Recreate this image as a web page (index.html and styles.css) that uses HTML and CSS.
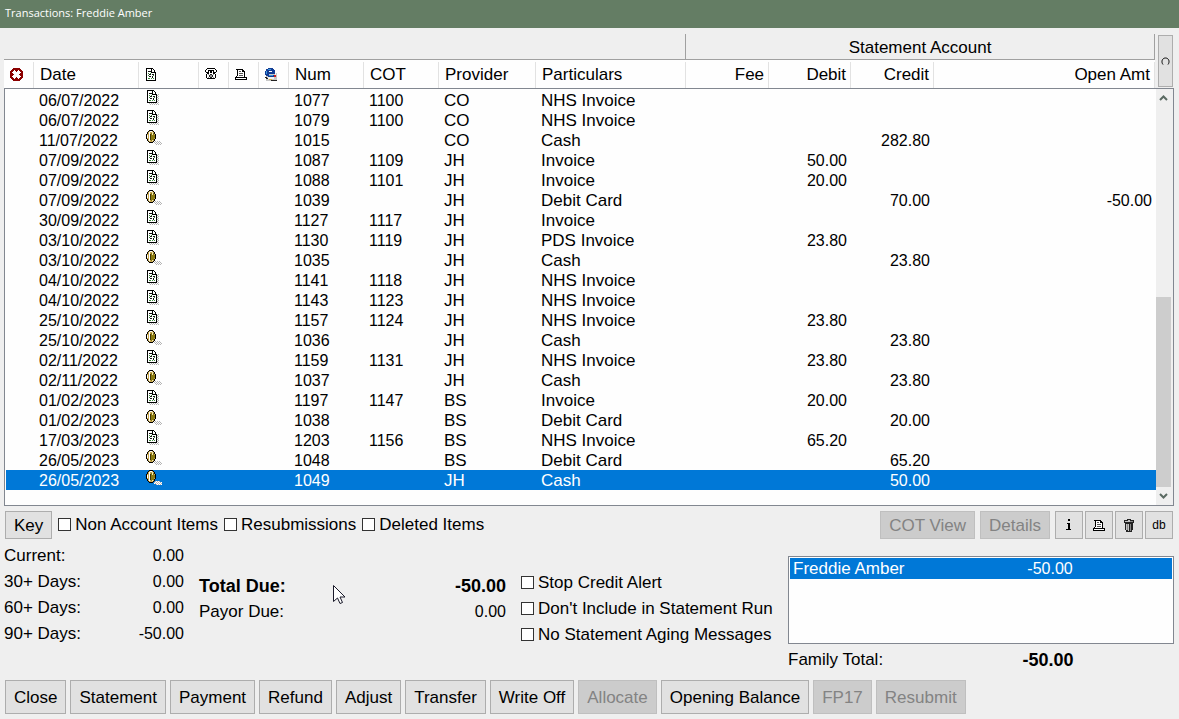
FILE: index.html
```html
<!DOCTYPE html>
<html lang="en-GB">

<head>
    <meta charset="UTF-8">
    <meta name="viewport" content="width=device-width, initial-scale=1.0">
    <title>Transactions: Freddie Amber</title>
    <link rel="stylesheet" href="styles.css">
</head>

<body>
    <!-- Shared icons -->
    <svg class="sprite" aria-hidden="true">
        <defs>
            <pattern id="dither" width="2" height="2" patternUnits="userSpaceOnUse">
                <path fill="#b4b4b4" d="M0 0h1v1h-1zM1 1h1v1h-1z" />
            </pattern>
            <g id="page">
                <path fill="#fff" d="M1 1h6v1h1v1h1v1h1v8h-9z" />
                <path fill="#000" d="M0 0h7v1h-7zM0 1h1v12h-1zM1 12h9v1h-9zM9 4h1v9h-1zM5 1h1v4h-1zM7 1h1v1h-1zM8 2h1v2h-1zM6 4h3v1h-3z" />
                <path fill="#111" d="M2 3h3v1h-3zM3 6h2v1h-2zM6 6h2v1h-2zM3 8h2v1h-2zM6 8h1v2h-1z" />
                <path fill="#3c8c3c" d="M2 5h1v1h-1zM4 5h1v1h-1zM2 7h1v1h-1zM7 7h1v1h-1zM2 10h2v1h-2zM5 10h1v1h-1zM7 10h1v1h-1z" />
            </g>
            <symbol id="invoice" viewBox="0 0 16 16">
                <path fill="url(#dither)" d="M10 4h3v11h-10v-2h7z" />
                <use href="#page" x="1" />
            </symbol>
            <symbol id="coin" viewBox="0 0 16 16">
                <path class="coin-shadow" d="M9 11h5v1h2v3h-6v-1h-2v-2h1z" />
                <path fill="url(#dither)" d="M9 11h5v1h2v3h-6v-1h-2z" />
                <path fill="#000" d="M3 0h4v1h1v1h1v2h1v5h-1v2h-1v1h-1v1h-4v-1h-1v-1h-1v-2h-1v-5h1v-2h1v-1h1z" />
                <path fill="#c8a850" d="M3 1h4v1h1v2h1v5h-1v2h-1v1h-4v-1h-1v-2h-1v-5h1v-2h1z" />
                <path fill="#fff" d="M3 2h1v9h-1zM1 5h1v3h-1zM4 1h2v1h-2z" />
                <path fill="#8a7a10" d="M5 3h3v2h1v3h-1v2h-1v1h-2z" />
                <path fill="#3c3408" d="M4 4h1v6h-1z" />
                <path fill="#f0e4b4" d="M6 2h1v3h-1zM6 10h1v1h-1z" />
            </symbol>
            <symbol id="printer" viewBox="0 0 12 11">
                <path fill="#fff" d="M3 1h5v1h1v6h-7v-1h1zM1 9h10v1h-10z" />
                <path fill="#000" d="M1 0h7v1h-7zM2 1h1v6h-1zM7 1h1v2h-1zM8 1h1v1h-1zM8 2h2v1h-2zM9 3h1v5h-1zM1 7h1v1h-1zM0 8h12v1h-12zM0 9h1v1h-1zM11 9h1v1h-1zM0 10h12v1h-12z" />
                <path fill="#555" d="M4 2h2v1h-2zM4 4h4v1h-4zM4 6h4v1h-4z" />
            </symbol>
        </defs>
    </svg>

    <header class="titlebar">
        <h1>Transactions: Freddie Amber</h1>
    </header>

    <main>
        <section class="grid-head">
            <table class="head-table">
                <colgroup>
                    <col class="c-void-head"><col class="c-date"><col class="c-type"><col class="c-flag"><col class="c-flag"><col class="c-flag"><col class="c-num"><col class="c-num"><col class="c-provider"><col class="c-particulars"><col class="c-fee"><col class="c-debit"><col class="c-fee"><col>
                </colgroup>
                <thead>
                    <tr class="band">
                        <td colspan="10"></td>
                        <th colspan="4" scope="colgroup">Statement Account</th>
                    </tr>
                    <tr class="columns">
                        <th scope="col" aria-label="Deleted">
                            <svg width="13" height="16" viewBox="0 0 13 16">
                                <path fill="#8b0000" d="M3 1h7v1h1v1h1v1h1v7h-1v1h-1v1h-1v1h-7v-1h-1v-1h-1v-1h-1v-7h1v-1h1v-1h1z" />
                                <path fill="#fff" d="M4 3h1v1h1v1h1v-1h1v-1h1v1h1v1h1v1h-1v1h-1v1h1v1h1v1h-1v1h-1v1h-1v-1h-1v-1h-1v1h-1v1h-1v-1h-1v-1h-1v-1h1v-1h1v-1h-1v-1h-1v-1h1v-1h1z" />
                            </svg>
                        </th>
                        <th scope="col">Date</th>
                        <th scope="col" aria-label="Type">
                            <svg width="12" height="16" viewBox="0 0 12 16"><use href="#page" x="1" y="1" /></svg>
                        </th>
                        <th scope="col" aria-label="Phone">
                            <svg width="12" height="16" viewBox="0 0 12 16">
                                <path fill="#fff" d="M1 2h10v3h-1v6h-8v-6h-1z" />
                                <path fill="#000" d="M2 1h8v1h-8zM1 2h1v1h-1zM10 2h1v1h-1zM0 3h1v2h-1zM11 3h1v2h-1zM1 5h3v1h-3zM8 5h3v1h-3zM3 3h6v1h-6zM3 4h1v1h-1zM8 4h1v1h-1zM5 4h2v2h-2zM2 6h2v1h-2zM8 6h2v1h-2zM1 7h1v4h-1zM10 7h1v4h-1zM2 11h8v1h-8z" />
                                <path fill="#222" d="M5 7h2v1h-2zM4 8h1v2h-1zM7 8h1v2h-1zM5 10h2v1h-2z" />
                                <path fill="#999" d="M5 8h2v2h-2zM3 7h1v1h-1zM8 7h1v1h-1zM3 10h1v1h-1zM8 10h1v1h-1z" />
                            </svg>
                        </th>
                        <th scope="col" aria-label="Printed">
                            <svg width="12" height="13" viewBox="0 0 12 13"><use href="#printer" width="12" height="11" /></svg>
                        </th>
                        <th scope="col" aria-label="Sent">
                            <svg width="13" height="16" viewBox="0 0 13 16">
                                <path fill="#c8c8c8" d="M1 6h11v8h-11z" />
                                <path fill="#f4f4f4" d="M3 10h6v2h-6zM10 6h1v2h-1z" />
                                <path fill="#123c94" d="M3 1h5v1h1v1h1v4h-6v1h6v1h-1v1h-6v-1h-2v-1h-1v-4h1v-2h2z" />
                                <path fill="#3c96dc" d="M3 2h3v1h-3zM1 4h1v3h-1zM4 8h4v1h-4z" />
                                <path fill="#fff" d="M4 4h3v1h-3z" />
                                <path fill="#c82020" d="M9 8h2v2h-2z" />
                                <path fill="#222" d="M0 10h2v1h-2zM1 11h2v1h-2zM6 13h6v1h-6z" />
                                <path fill="#dcb43c" d="M4 12h3v1h-3z" />
                            </svg>
                        </th>
                        <th scope="col">Num</th>
                        <th scope="col">COT</th>
                        <th scope="col">Provider</th>
                        <th scope="col">Particulars</th>
                        <th scope="col" class="right">Fee</th>
                        <th scope="col" class="right">Debit</th>
                        <th scope="col" class="right">Credit</th>
                        <th scope="col" class="right">Open Amt</th>
                    </tr>
                </thead>
            </table>
            <button class="refresh" aria-label="Refresh">
                <svg width="9" height="9" viewBox="0 0 9 9"><path fill="none" stroke="#000" d="M2 7.500C0 5 1 1 4.500 1S9 5 7 7.500" /></svg>
            </button>
        </section>

        <section class="grid-body">
            <table class="body-table" aria-label="Transactions">
                <colgroup>
                    <col class="c-void"><col class="c-date"><col class="c-type"><col class="c-flag"><col class="c-flag"><col class="c-flag"><col class="c-num"><col class="c-num"><col class="c-provider"><col class="c-particulars"><col class="c-fee"><col class="c-debit"><col class="c-fee"><col>
                </colgroup>
                <tbody id="rows"></tbody>
            </table>
            <div class="scrollbar">
                <button aria-label="Scroll up">
                    <svg width="9" height="6" viewBox="0 0 9 6"><path fill="none" stroke="#5a6a62" stroke-width="2" d="M1 5L4.500 1.500L8 5" /></svg>
                </button>
                <div class="track"><div class="thumb"></div></div>
                <button aria-label="Scroll down">
                    <svg width="9" height="6" viewBox="0 0 9 6"><path fill="none" stroke="#5a6a62" stroke-width="2" d="M1 1L4.500 4.500L8 1" /></svg>
                </button>
            </div>
        </section>

        <section class="toolbar">
            <button>Key</button>
            <label><input type="checkbox">Non Account Items</label>
            <label><input type="checkbox">Resubmissions</label>
            <label><input type="checkbox">Deleted Items</label>
            <div class="toolbar-right">
                <button disabled>COT View</button>
                <button disabled>Details</button>
                <div class="icon-buttons">
                    <button aria-label="Information">
                        <svg width="6" height="12" viewBox="0 0 6 12"><path fill="#000" d="M2 0h2v2h-2zM1 4h3v6h1v1h-5v-1h2v-5h-1z" /></svg>
                    </button>
                    <button aria-label="Print">
                        <svg width="12" height="11"><use href="#printer" /></svg>
                    </button>
                    <button aria-label="Delete">
                        <svg width="12" height="13" viewBox="0 0 12 13">
                            <path fill="#222" d="M4 0h4v1h3v3h-1v7h-1v2h-6v-2h-1v-7h-1v-3h3z" />
                            <path fill="#c4c4c4" d="M5 1h2v1h-2zM2 2h5v1h-5zM3 5h1v6h-1zM5 5h1v7h-1z" />
                            <path fill="#888" d="M7 5h1v7h-1zM4 5h1v6h-1zM7 2h3v1h-3z" />
                        </svg>
                    </button>
                    <button class="small">db</button>
                </div>
            </div>
        </section>

        <section class="summary">
            <dl class="amounts">
                <dt>Current:</dt><dd>0.00</dd>
                <dt>30+ Days:</dt><dd>0.00</dd>
                <dt>60+ Days:</dt><dd>0.00</dd>
                <dt>90+ Days:</dt><dd>-50.00</dd>
            </dl>
            <dl class="amounts due">
                <dt class="bold">Total Due:</dt><dd class="bold">-50.00</dd>
                <dt>Payor Due:</dt><dd>0.00</dd>
            </dl>
            <div class="options">
                <label><input type="checkbox">Stop Credit Alert</label>
                <label><input type="checkbox">Don't Include in Statement Run</label>
                <label><input type="checkbox">No Statement Aging Messages</label>
            </div>
            <div class="family">
                <div class="family-list" role="listbox" aria-label="Family members">
                    <div class="family-row selected" role="option" aria-selected="true"><span>Freddie Amber</span><span class="amount">-50.00</span></div>
                </div>
                <div class="family-row"><span>Family Total:</span><strong class="bold">-50.00</strong></div>
            </div>
        </section>

        <footer class="actions">
            <button>Close</button>
            <button>Statement</button>
            <button>Payment</button>
            <button>Refund</button>
            <button>Adjust</button>
            <button>Transfer</button>
            <button>Write Off</button>
            <button disabled>Allocate</button>
            <button>Opening Balance</button>
            <button disabled>FP17</button>
            <button disabled>Resubmit</button>
        </footer>
    </main>

    <svg class="pointer" width="13" height="20" viewBox="0 0 13 20" aria-hidden="true">
        <path fill="#fff" stroke="#1a1a2a" d="M0.500 0.500V16.500L4.500 13L7 18.500L9.500 17.500L7 12H12Z" />
    </svg>

    <script>
        // date, icon, num, cot, provider, particulars, debit, credit, open amount
        const transactions = [
            ["06/07/2022", "invoice", "1077", "1100", "CO", "NHS Invoice", "", "", ""],
            ["06/07/2022", "invoice", "1079", "1100", "CO", "NHS Invoice", "", "", ""],
            ["11/07/2022", "coin", "1015", "", "CO", "Cash", "", "282.80", ""],
            ["07/09/2022", "invoice", "1087", "1109", "JH", "Invoice", "50.00", "", ""],
            ["07/09/2022", "invoice", "1088", "1101", "JH", "Invoice", "20.00", "", ""],
            ["07/09/2022", "coin", "1039", "", "JH", "Debit Card", "", "70.00", "-50.00"],
            ["30/09/2022", "invoice", "1127", "1117", "JH", "Invoice", "", "", ""],
            ["03/10/2022", "invoice", "1130", "1119", "JH", "PDS Invoice", "23.80", "", ""],
            ["03/10/2022", "coin", "1035", "", "JH", "Cash", "", "23.80", ""],
            ["04/10/2022", "invoice", "1141", "1118", "JH", "NHS Invoice", "", "", ""],
            ["04/10/2022", "invoice", "1143", "1123", "JH", "NHS Invoice", "", "", ""],
            ["25/10/2022", "invoice", "1157", "1124", "JH", "NHS Invoice", "23.80", "", ""],
            ["25/10/2022", "coin", "1036", "", "JH", "Cash", "", "23.80", ""],
            ["02/11/2022", "invoice", "1159", "1131", "JH", "NHS Invoice", "23.80", "", ""],
            ["02/11/2022", "coin", "1037", "", "JH", "Cash", "", "23.80", ""],
            ["01/02/2023", "invoice", "1197", "1147", "BS", "Invoice", "20.00", "", ""],
            ["01/02/2023", "coin", "1038", "", "BS", "Debit Card", "", "20.00", ""],
            ["17/03/2023", "invoice", "1203", "1156", "BS", "NHS Invoice", "65.20", "", ""],
            ["26/05/2023", "coin", "1048", "", "BS", "Debit Card", "", "65.20", ""],
            ["26/05/2023", "coin", "1049", "", "JH", "Cash", "", "50.00", ""]
        ];

        const rows = document.getElementById("rows");

        transactions.forEach(function ([date, icon, num, cot, provider, particulars, debit, credit, open]) {
            const row = document.createElement("tr");
            row.innerHTML = `<td></td><td>${date}</td>
                <td class="icon"><svg width="16" height="16" role="img" aria-label="${icon}"><use href="#${icon}" /></svg></td>
                <td></td><td></td><td></td>
                <td>${num}</td><td>${cot}</td><td class="text">${provider}</td><td class="text">${particulars}</td>
                <td></td><td class="right">${debit}</td><td class="right">${credit}</td><td class="right">${open}</td>`;
            row.onclick = function () {
                selectRow(row);
            };
            rows.appendChild(row);
        });

        function selectRow(row) {
            rows.querySelectorAll(".selected").forEach(r => r.classList.remove("selected"));
            row.classList.add("selected");
        }

        selectRow(rows.lastElementChild);
    </script>
</body>

</html>
```
FILE: styles.css
```css
* {
    box-sizing: border-box;
}

body {
    margin: 0;
    background-color: #efefef;
    color: #000;
    font-family: "Liberation Sans", Arial, sans-serif;
    font-size: 17px;
    line-height: 20px;
}

.sprite {
    position: absolute;
    width: 0;
    height: 0;
}

svg {
    display: block;
    shape-rendering: crispEdges;
}

.titlebar {
    height: 28px;
    padding: 0 5px;
    background-color: #647d64;
    color: #fff;
}

.titlebar h1 {
    margin: 0;
    font-family: "Open Sans", "Noto Sans", sans-serif;
    font-size: 11px;
    font-weight: normal;
    line-height: 26px;
}

main {
    padding: 6px 5px 5px 4px;
}

/* Tables */
table {
    width: 100%;
    table-layout: fixed;
    border-collapse: separate;
    border-spacing: 0;
}

th,
td {
    padding: 0;
    font-weight: normal;
    text-align: left;
    white-space: nowrap;
}

.c-void-head { width: 30px; }
.c-void { width: 28px; }
.c-date { width: 105px; }
.c-type { width: 60px; }
.c-flag { width: 30px; }
.c-num { width: 75px; }
.c-provider { width: 97px; }
.c-particulars { width: 150px; }
.c-fee { width: 83px; }
.c-debit { width: 82px; }

.grid-head {
    display: flex;
    gap: 3px;
    padding-right: 1px;
}

.head-table {
    flex: 1;
}

.band td,
.band th {
    height: 26px;
    padding-top: 2px;
    border-right: 1px solid #a0a0a0;
    border-bottom: 1px solid #a0a0a0;
    text-align: center;
}

.columns th {
    height: 28px;
    padding: 2px 5px 0 6px;
    background: #fefefe linear-gradient(#e2e2e2, #e2e2e2) right bottom / 1px 26px no-repeat;
}

.columns .right {
    padding-right: 5px;
}

.right {
    text-align: right;
}

.grid-body {
    display: flex;
    border: 1px solid #828790;
    background-color: #fefefe;
}

.body-table {
    flex: 1;
    align-self: flex-start;
    margin: 1px 0 15px 1px;
}

.body-table td {
    height: 20px;
    padding: 2px 0 0 5px;
    font-size: 16px;
    line-height: 18px;
}

.body-table .text {
    font-size: 17px;
}

.body-table .icon {
    padding: 0 0 0 7px;
    vertical-align: top;
}

.body-table .right {
    padding-right: 4px;
}

.selected {
    --shadow: #fff;
    background-color: #0078d7;
    color: #fff;
}

.coin-shadow {
    fill: var(--shadow, none);
}

.scrollbar {
    display: flex;
    flex-direction: column;
    width: 17px;
    background-color: #efefef;
}

.track {
    display: flex;
    flex: 1;
    flex-direction: column;
    justify-content: flex-end;
}

.thumb {
    width: 15px;
    height: 50%;
    background-color: #cdcdcd;
}

/* Buttons and check boxes */
button {
    display: flex;
    align-items: center;
    justify-content: center;
    height: 28px;
    margin: 0;
    padding: 2px 8px 0;
    border: 1px solid #adadad;
    background-color: #e1e1e1;
    color: #000;
    font: inherit;
    white-space: nowrap;
}

button:disabled {
    border-color: #bfbfbf;
    background-color: #ccc;
    color: #838383;
}

.icon-buttons button {
    width: 28px;
    padding: 0;
}

.icon-buttons .small {
    font-size: 12px;
}

.refresh {
    width: 15px;
    height: 52px;
    margin-top: 1px;
    padding: 0;
}

.scrollbar button {
    width: 15px;
    height: 18px;
    padding: 0;
    border: 0;
    background: none;
}

.refresh svg,
.scrollbar svg {
    shape-rendering: auto;
}

label {
    display: flex;
    align-items: center;
    gap: 4px;
    white-space: nowrap;
}

input[type="checkbox"] {
    appearance: none;
    width: 13px;
    height: 13px;
    margin: 0 0 2px;
    border: 1px solid #333;
    background-color: #fff;
}

input[type="checkbox"]:checked {
    background-color: #0078d7;
}

.toolbar {
    display: flex;
    align-items: center;
    gap: 6px;
    padding: 5px 1px 0;
}

.toolbar-right {
    display: flex;
    gap: 5px;
    margin-left: auto;
}

.icon-buttons {
    display: flex;
    gap: 2px;
}

/* Balances */
.summary {
    display: grid;
    grid-template-columns: 180fr 307fr 252fr 386fr;
    column-gap: 15px;
    padding-top: 4px;
}

.amounts {
    display: grid;
    grid-template-columns: auto auto;
    align-content: start;
    margin: 0;
    line-height: 26px;
}

.amounts dd {
    margin: 0;
    font-size: 16px;
    text-align: right;
}

.due {
    padding-top: 30px;
}

.amounts .bold,
.family .bold {
    font-size: 18px;
    font-weight: bold;
}

.options {
    padding-top: 27px;
}

.options label {
    height: 26px;
}

.family {
    padding-top: 13px;
}

.family-list {
    height: 88px;
    margin-bottom: 6px;
    padding: 1px;
    border: 1px solid #828790;
    background-color: #fefefe;
}

/* name on the left, amount right-aligned at three quarters */
.family-row {
    display: flex;
    justify-content: space-between;
    padding-right: 26%;
}

.family-list .family-row {
    padding-left: 3px;
    line-height: 21px;
}

.family-row .amount {
    font-size: 16px;
}

.actions {
    display: flex;
    gap: 4px;
    padding: 10px 0 0 1px;
}

.actions button {
    height: 34px;
}

.pointer {
    position: absolute;
    left: 333px;
    top: 585px;
    shape-rendering: auto;
}
```
